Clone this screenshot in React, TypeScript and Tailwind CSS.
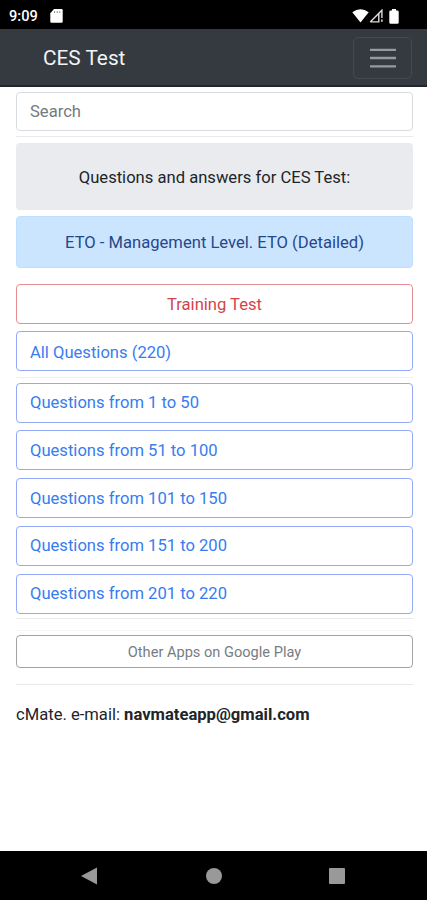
import React from 'react';

const ranges = ['1 to 50', '51 to 100', '101 to 150', '151 to 200', '201 to 220'];

const StatusBar: React.FC = () => (
  <div className="flex h-[29px] items-center bg-black pt-[3px] pl-[9px] pr-[28px] text-white">
    <span className="w-[41px] text-[14.6px] leading-none font-medium">9:09</span>
    <svg width="13" height="14" viewBox="0 0 13 14">
      <path d="M4 0h7.5q1.2 0 1.2 1.2v11.3q0 1.2-1.2 1.2h-10q-1.2 0-1.2-1.2V4.3z" fill="#fff" />
      <path d="M4.6 2.3v1.6M7.2 2.3v1.6M9.8 2.3v1.6" stroke="#777" strokeWidth="1" />
    </svg>
    <div className="ml-auto flex items-center">
      <svg width="17" height="14" viewBox="0 0 17 14">
        <path d="M0.3 3.2Q8.5-2.6 16.7 3.2L8.5 13.5z" fill="#fff" />
      </svg>
      <svg width="14" height="14" viewBox="0 0 14 14">
        <path d="M1.2 12.9L12.9 1.2V9M1.2 12.9H9.8V4.5" fill="none" stroke="#ddd" strokeWidth="1.4" />
        <path d="M12.9 10.6v2.2" stroke="#ddd" strokeWidth="1.6" />
      </svg>
      <svg className="ml-[6px]" width="10" height="15" viewBox="0 0 10 15">
        <path d="M3 0h4v1.6h1.4q1.3 0 1.3 1.3v10.6q0 1.3-1.3 1.3H1.6q-1.3 0-1.3-1.3V2.9q0-1.3 1.3-1.3H3z" fill="#fff" />
      </svg>
    </div>
  </div>
);

const Navbar: React.FC = () => (
  <nav className="flex h-[58px] items-center justify-between border-b-2 border-[#20272e] bg-[#343a40] pl-[43px] pr-[15px]">
    <span className="pt-[3px] text-[20.8px] leading-none text-[#f1f3f5]">CES Test</span>
    <button className="mt-[2px] flex h-[42px] w-[59px] items-center justify-center rounded-[5px] border border-[#444b50]">
      <svg width="26" height="20" viewBox="0 0 26 20">
        <path d="M0 1.8h26M0 10h26M0 18.3h26" stroke="#96999d" strokeWidth="2.3" />
      </svg>
    </button>
  </nav>
);

export default function App() {
  return (
    <div className="flex h-[900px] w-[427px] flex-col overflow-hidden bg-white font-['Roboto',sans-serif] text-[16.6px] leading-[24px] text-[#212529]">
      <StatusBar />
      <Navbar />

      <main className="flex flex-1 flex-col pl-4 pr-[14px]">
        <input
          placeholder="Search"
          className="mt-[5px] h-[39px] w-full rounded-[4px] border border-[#d8dbdf] px-[13px] placeholder-[#747a80] outline-none"
        />
        <hr className="mt-[5px] border-[#e9eaeb]" />

        <div className="mt-[6px] flex h-[67px] items-center justify-center rounded-[4px] bg-[#e9ebee] pt-[2px]">
          Questions and answers for CES Test:
        </div>
        <div className="mt-[6px] flex h-[52px] items-center justify-center rounded-[4px] border border-[#c0deff] bg-[#cce5ff] pt-[2px] text-[#26478a]">
          ETO - Management Level. ETO (Detailed)
        </div>

        <button className="mt-4 h-[40px] rounded-[4px] border border-[#e58c92] pt-[2px] text-[#d3434d]">
          Training Test
        </button>
        <button className="mt-[7px] h-[40px] rounded-[4px] border border-[#94aaf8] px-[13px] pt-[3px] text-left text-[#377cf0]">
          All Questions (220)
        </button>
        <hr className="mt-[6px] border-[#f0f0f3]" />

        <div className="mt-[4.5px] flex flex-col gap-[7.8px]">
          {ranges.map((range) => (
            <button
              key={range}
              className="h-[40px] rounded-[4px] border border-[#94aaf8] px-[13px] pt-[1px] text-left text-[#377cf0]"
            >
              Questions from {range}
            </button>
          ))}
        </div>

        <hr className="mt-[4.5px] border-[#e9eaeb]" />
        <hr className="mt-[11px] border-[#f5f5f5]" />
        <button className="mt-[4px] h-[33px] rounded-[4px] border border-[#a1a4a7] text-[14.6px] text-[#777d82]">
          Other Apps on Google Play
        </button>
        <hr className="mt-4 border-[#e9eaeb]" />
        <p className="mt-[18px]">
          cMate. e-mail: <b>navmateapp@gmail.com</b>
        </p>
      </main>

      {/* system navigation */}
      <footer className="flex h-[49px] items-center justify-between bg-black pl-[81px] pr-[82px]">
        <svg width="17" height="18" viewBox="0 0 17 18">
          <path d="M0 9L16 0.5v17z" fill="#999" />
        </svg>
        <div className="h-4 w-4 rounded-full bg-[#999]" />
        <div className="h-4 w-4 rounded-[1px] bg-[#999]" />
      </footer>
    </div>
  );
}
